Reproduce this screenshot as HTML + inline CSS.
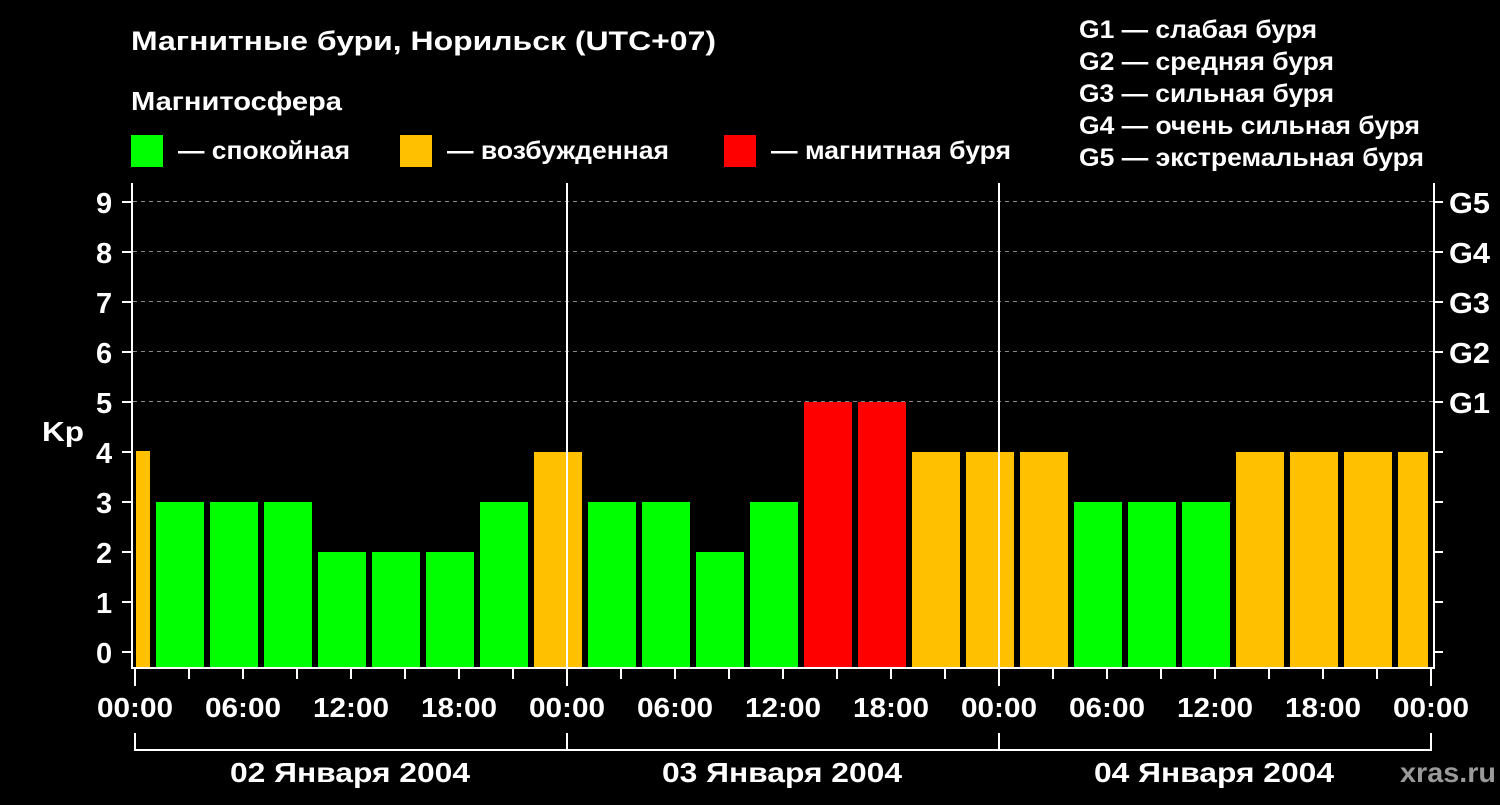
<!DOCTYPE html><html><head><meta charset="utf-8"><style>
body{margin:0;background:#000;width:1500px;height:800px;overflow:hidden}
svg text{font-family:"Liberation Sans",sans-serif;font-weight:bold;fill:#fff}
</style></head><body>
<svg width="1500" height="800" xmlns="http://www.w3.org/2000/svg">
<text x="131" y="50" font-size="27" textLength="585" lengthAdjust="spacingAndGlyphs">Магнитные бури, Норильск (UTC+07)</text>
<text x="131" y="110" font-size="26" textLength="211" lengthAdjust="spacingAndGlyphs">Магнитосфера</text>
<rect x="131" y="135" width="32" height="32" fill="#00ff00"/>
<text x="178" y="159" font-size="25" textLength="172" lengthAdjust="spacingAndGlyphs">— спокойная</text>
<rect x="400" y="135" width="32" height="32" fill="#ffc000"/>
<text x="447" y="159" font-size="25" textLength="222" lengthAdjust="spacingAndGlyphs">— возбужденная</text>
<rect x="724" y="135" width="32" height="32" fill="#ff0000"/>
<text x="771" y="159" font-size="25" textLength="240" lengthAdjust="spacingAndGlyphs">— магнитная буря</text>
<text x="1079" y="38" font-size="25" textLength="238" lengthAdjust="spacingAndGlyphs">G1 — слабая буря</text>
<text x="1079" y="70" font-size="25" textLength="255" lengthAdjust="spacingAndGlyphs">G2 — средняя буря</text>
<text x="1079" y="102" font-size="25" textLength="255" lengthAdjust="spacingAndGlyphs">G3 — сильная буря</text>
<text x="1079" y="134" font-size="25" textLength="341" lengthAdjust="spacingAndGlyphs">G4 — очень сильная буря</text>
<text x="1079" y="166" font-size="25" textLength="345" lengthAdjust="spacingAndGlyphs">G5 — экстремальная буря</text>
<g stroke="#888" stroke-dasharray="4,4" stroke-width="1">
<line x1="133" x2="1433" y1="201.5" y2="201.5"/><line x1="133" x2="1433" y1="251.5" y2="251.5"/>
<line x1="133" x2="1433" y1="301.5" y2="301.5"/><line x1="133" x2="1433" y1="351.5" y2="351.5"/>
<line x1="133" x2="1433" y1="401.5" y2="401.5"/>
</g>
<g id="bars"></g>
<g stroke="#fff" stroke-width="2">
<line x1="132" y1="183" x2="132" y2="669"/><line x1="1434" y1="183" x2="1434" y2="669"/>
<line x1="131" y1="668" x2="1435" y2="668"/>
<line x1="567" y1="183" x2="567" y2="668"/><line x1="999" y1="183" x2="999" y2="668"/>
<line x1="135" y1="733" x2="135" y2="751"/><line x1="567" y1="733" x2="567" y2="751"/>
<line x1="999" y1="733" x2="999" y2="751"/><line x1="1431" y1="733" x2="1431" y2="751"/>
<line x1="134" y1="750" x2="1432" y2="750"/>
</g>
<g id="ticks" stroke="#fff" stroke-width="2"></g>
<g id="labels"></g>
<text x="42" y="441" font-size="28" textLength="42" lengthAdjust="spacingAndGlyphs">Kp</text>
<text x="230" y="782" font-size="28" textLength="240" lengthAdjust="spacingAndGlyphs">02 Января 2004</text>
<text x="662" y="782" font-size="28" textLength="240" lengthAdjust="spacingAndGlyphs">03 Января 2004</text>
<text x="1094" y="782" font-size="28" textLength="240" lengthAdjust="spacingAndGlyphs">04 Января 2004</text>
<text x="1400" y="782" font-size="28" textLength="96" lengthAdjust="spacingAndGlyphs" style="fill:#9a9a9a">xras.ru</text>
</svg>
<script>
var ns="http://www.w3.org/2000/svg";
function el(p,t,a,txt){var e=document.createElementNS(ns,t);for(var k in a)e.setAttribute(k,a[k]);if(txt)e.textContent=txt;document.getElementById(p).appendChild(e);}
var v=[3,3,3,2,2,2,3,4,3,3,2,3,5,5,4,4,4,3,3,3,4,4,4,4];
function col(k){return k>=5?"#ff0000":k>=4?"#ffc000":"#00ff00";}
el("bars","rect",{x:136,y:451,width:14,height:216,fill:"#ffc000"});
for(var i=0;i<24;i++){var x=156+54*i,w=(i==23)?30:48,y=652-50*v[i];el("bars","rect",{x:x,y:y,width:w,height:667-y,fill:col(v[i])});}
for(var k=0;k<=9;k++){var y=652-50*k;el("ticks","line",{x1:122,x2:131,y1:y,y2:y});el("ticks","line",{x1:1434,x2:1443,y1:y,y2:y});
el("labels","text",{x:96,y:y+11,"font-size":29},""+k);}
var g=["G1","G2","G3","G4","G5"];for(var j=0;j<5;j++)el("labels","text",{x:1449,y:402-50*j+11,"font-size":29,textLength:41,lengthAdjust:"spacingAndGlyphs"},g[j]);
for(var h=0;h<=24;h++){var x=135+18*3*h;el("ticks","line",{x1:x,x2:x,y1:669,y2:(h%8==0)?686:679});}
var lb=["00:00","06:00","12:00","18:00"];
for(var h=0;h<=12;h++){var x=135+108*h;el("labels","text",{x:x-38,y:717,"font-size":28,textLength:76,lengthAdjust:"spacingAndGlyphs"},lb[h%4]);}
</script>
</body></html>
